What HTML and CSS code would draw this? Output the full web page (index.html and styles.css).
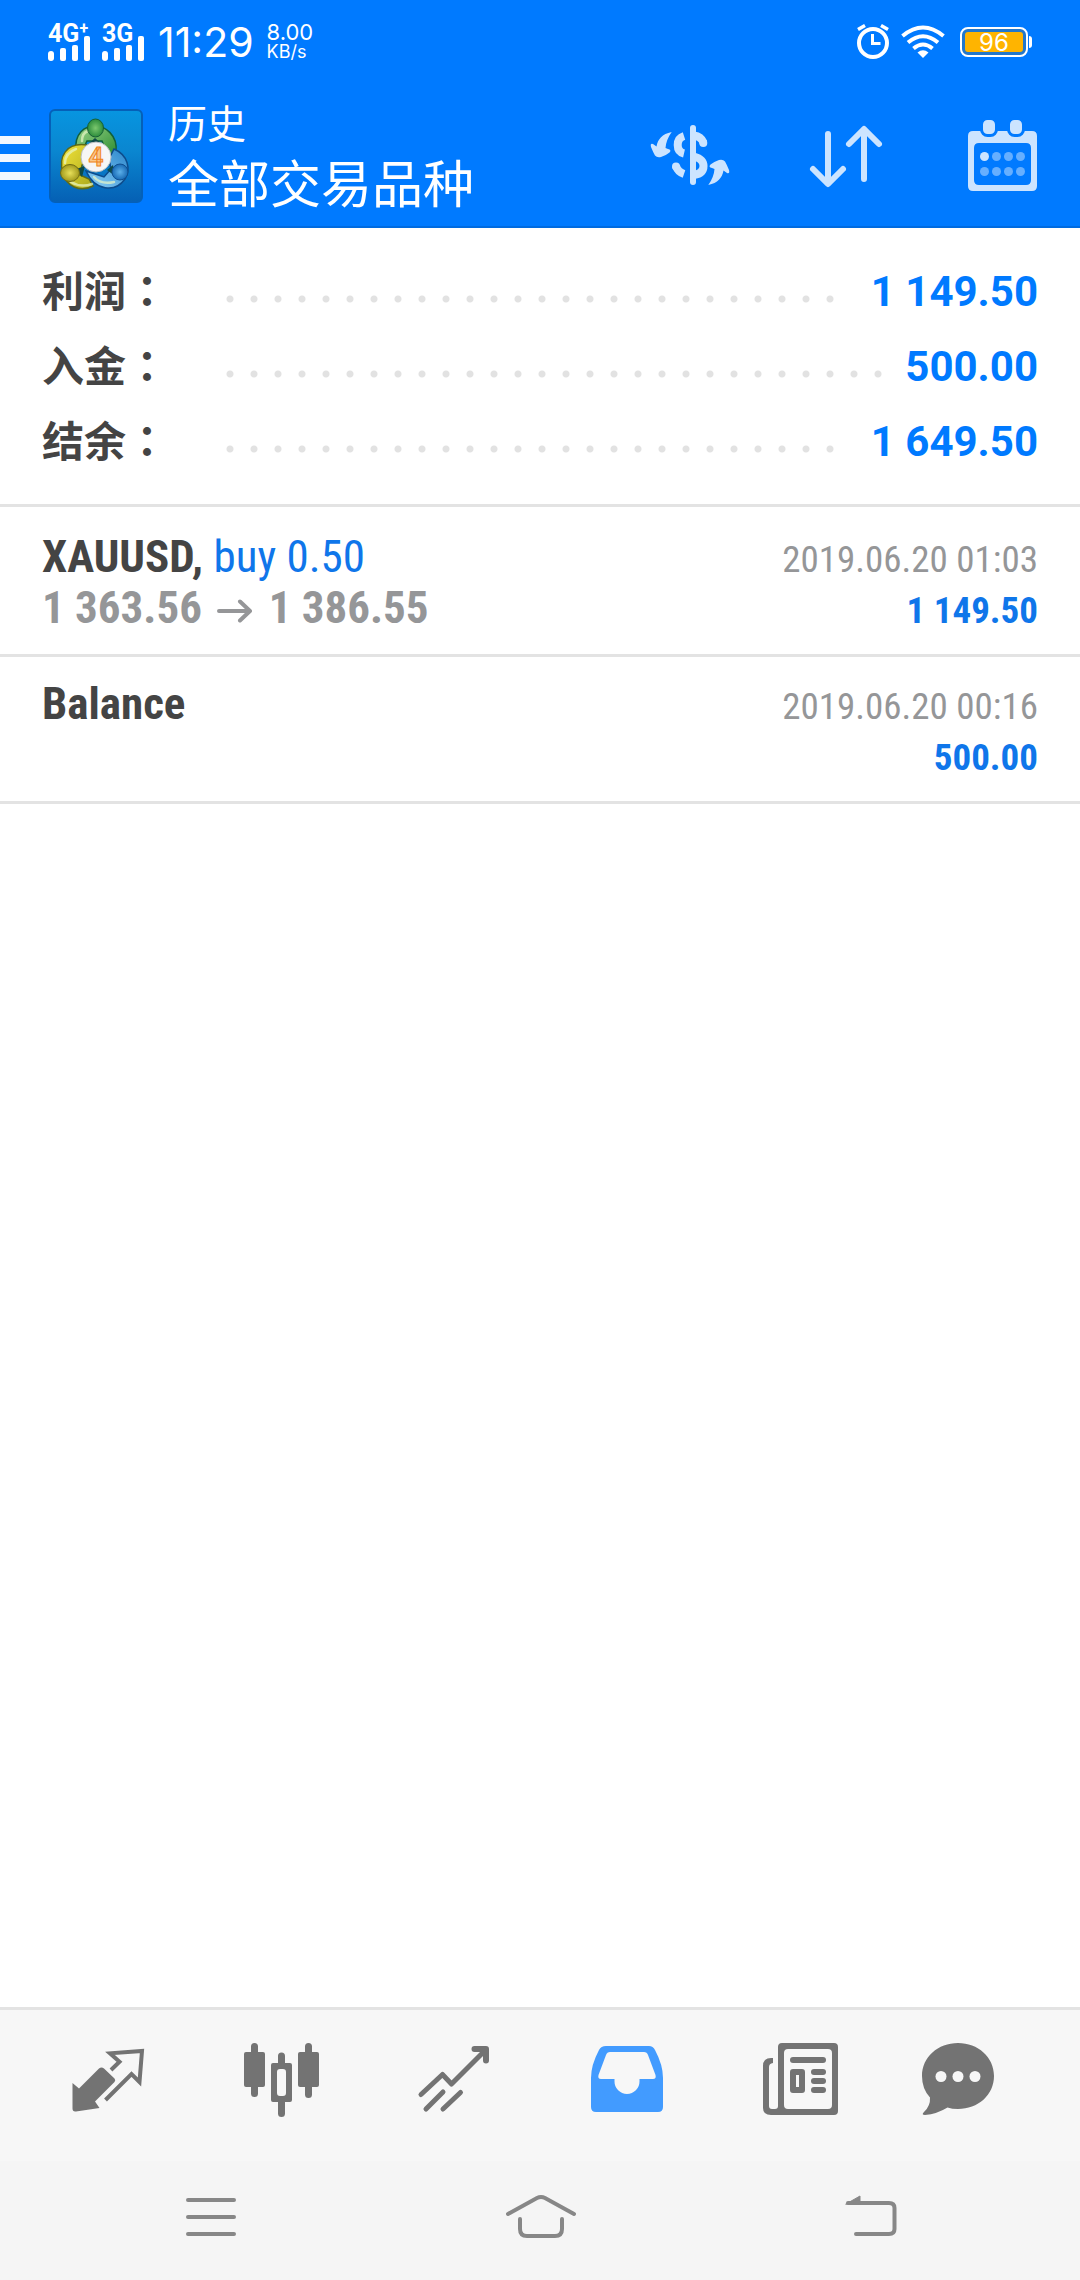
FILE: index.html
```html
<!DOCTYPE html>
<html lang="zh-CN">
<head>
<meta charset="utf-8">
<meta name="viewport" content="width=device-width, initial-scale=1">
<title>历史</title>
<link rel="stylesheet" href="styles.css">
</head>
<body>
<div class="app">
  <div class="status">
    <div class="sim">
      <span class="sim-label">4G<sup class="plus">+</sup></span>
      <svg class="bars" viewBox="0 0 42 25" aria-hidden="true"><rect y="15" width="6" height="10" rx="3"/><rect x="12" y="12" width="6" height="13" rx="2"/><rect x="24" y="9" width="6" height="16" rx="2"/><rect x="36" width="6" height="25" rx="2"/></svg>
    </div>
    <div class="sim">
      <span class="sim-label">3G</span>
      <svg class="bars" viewBox="0 0 42 25" aria-hidden="true"><rect y="15" width="6" height="10" rx="3"/><rect x="12" y="12" width="6" height="13" rx="2"/><rect x="24" y="9" width="6" height="16" rx="2"/><rect x="36" width="6" height="25" rx="2"/></svg>
    </div>
    <time class="clock">11:29</time>
    <div class="speed"><span class="rate">8.00</span><span class="unit">KB/s</span></div>
    <div class="status-right">
      <svg class="alarm" viewBox="0 0 32 36" fill="none" stroke="#fff" stroke-width="4" aria-hidden="true"><circle cx="16" cy="19" r="14"/><path d="M15.500 10V19.500H23.500" stroke-width="3"/><path d="M1 5.500L8 1.500M24 1.500L31 5.500" stroke-width="3.500"/></svg>
      <svg class="wifi" viewBox="0 0 44 34" fill="none" stroke="#fff" stroke-width="4" aria-hidden="true"><path d="M1.500 11Q22 -6 42.500 11"/><path d="M7 17.500Q22 5 37 17.500"/><path d="M12.500 23.500Q22 15.500 31.500 23.500"/><path d="M16.500 27.500Q22 23 27.500 27.500L22 33Z" fill="#fff" stroke="none"/></svg>
      <div class="battery"><span class="level">96</span></div>
    </div>
  </div>

  <header class="header">
    <button class="menu" aria-label="菜单"><span></span><span></span><span></span></button>
    <svg class="logo" viewBox="0 0 94 94" aria-hidden="true">
      <defs>
        <linearGradient id="bg" x1="0" y1="0" x2="0" y2="1"><stop offset="0" stop-color="#0795e0"/><stop offset=".45" stop-color="#0a86d0"/><stop offset="1" stop-color="#0560b4"/></linearGradient>
        <linearGradient id="gr" x1="0" y1="0" x2="1" y2="1"><stop offset="0" stop-color="#9ad58a"/><stop offset="1" stop-color="#23862a"/></linearGradient>
        <linearGradient id="ye" x1="0" y1="0" x2="1" y2="1"><stop offset="0" stop-color="#f3e43a"/><stop offset="1" stop-color="#a9a81c"/></linearGradient>
        <linearGradient id="bl" x1="0" y1="1" x2="1" y2="0"><stop offset="0" stop-color="#8cd0f6"/><stop offset="1" stop-color="#2b86cc"/></linearGradient>
        <radialGradient id="gh"><stop offset="0" stop-color="#7cc86e"/><stop offset="1" stop-color="#2c8c3c"/></radialGradient>
        <radialGradient id="yh"><stop offset="0" stop-color="#e8e05a"/><stop offset="1" stop-color="#a29a1c"/></radialGradient>
        <radialGradient id="bh"><stop offset="0" stop-color="#5cb0ea"/><stop offset="1" stop-color="#1769b4"/></radialGradient>
      </defs>
      <rect x="1" y="1" width="92" height="92" rx="5" fill="url(#bg)" stroke="#0560b8" stroke-width="2"/>
      <path d="M27 42C25 24 36 17 46 17S69 26 67 43L61 52L53 32L38 32L32 44Z" fill="url(#gr)" stroke="#12603a" stroke-width="1.500"/>
      <path d="M38 36C17 33 9 48 14 64C17 77 31 84 44 77L40 70L31 66L33 56L38 50Z" fill="url(#ye)" stroke="#5e6a18" stroke-width="1.500"/>
      <path d="M65 40C79 46 82 60 76 70C66 84 46 82 37 62L55 68L62 60L60 50Z" fill="url(#bl)" stroke="#0d4c8c" stroke-width="1.500"/>
      <path d="M16 54Q16 44 27 40M43 75Q32 79 22 73M33 32Q33 24 39 22M45 68Q52 76 65 73" fill="none" stroke="#e8f6c8" stroke-width="2.500" stroke-linecap="round" opacity=".7"/>
      <path d="M36 38L46 29L56 38ZM27 60L36 57L33 68ZM58 61L64 56L66 67Z" fill="#0e4a48"/>
      <ellipse cx="46.500" cy="19" rx="8" ry="9" fill="url(#gh)" stroke="#165e34"/>
      <ellipse cx="21" cy="64" rx="9.500" ry="8.500" fill="url(#yh)" stroke="#716c14"/>
      <ellipse cx="71" cy="63" rx="8" ry="8" fill="url(#bh)" stroke="#0f4e90"/>
      <circle cx="47" cy="48" r="15" fill="#f6f6f6" stroke="#b9bfc2"/>
      <text x="47" y="57" text-anchor="middle" class="logo-four">4</text>
    </svg>
    <div class="titles">
      <span class="crumb">历史</span>
      <h1 class="title">全部交易品种</h1>
    </div>
    <div class="actions">
      <button class="action" aria-label="入金与出金">
        <svg viewBox="0 0 80 80" fill="none" stroke="#cce4ff" stroke-width="8">
          <path id="curl" d="M21.700 17C12 19 8 24 6.500 31.500L3 29Q0 28 1 32Q3 37 5 40.500Q7 43 11 42Q16 40.500 19.500 37.500Q22 35 18 34L15.500 33Q16 25 21.700 17Z" fill="#cce4ff" stroke="none"/>
          <use href="#curl" transform="rotate(180 40 43.500)"/>
          <path d="M34 21Q27.700 23 27.700 30Q27.700 37 34 38.500M44 20.500Q51 21.500 53.500 27.500" /><circle cx="53.300" cy="28" r="4" fill="#cce4ff" stroke="none"/>
          <path d="M34 59Q28 57 26 51"/><circle cx="26" cy="51.500" r="4" fill="#cce4ff" stroke="none"/>
          <path d="M44 41.500Q53.500 44 53.500 51Q53.500 58.500 44 60"/>
          <path d="M43 13V67" stroke-width="6" stroke-linecap="round"/>
        </svg>
      </button>
      <button class="action" aria-label="排序">
        <svg viewBox="0 0 80 80" fill="none" stroke="#cce4ff" stroke-width="6" stroke-linecap="round" stroke-linejoin="round"><path d="M22 19V67M58 15V64"/><path d="M7 54L22 69L37 54M43 29L58 14L73 29"/></svg>
      </button>
      <button class="action" aria-label="日期">
        <svg viewBox="0 0 80 80" fill="#cce4ff"><path fill-rule="evenodd" d="M11 16H70Q75 16 75 21V71Q75 76 70 76H11Q6 76 6 71V21Q6 16 11 16ZM17 28Q12 28 12 33V65Q12 70 17 70H64Q69 70 69 65V33Q69 28 64 28Z"/><g stroke="#007aff" stroke-width="3"><rect x="19.500" y="3.500" width="15" height="17" rx="6"/><rect x="46.500" y="3.500" width="15" height="17" rx="6"/></g><circle cx="22.500" cy="41.500" r="4.500"/><g fill="#66afff"><circle cx="34.500" cy="41.500" r="4.500"/><circle cx="46.500" cy="41.500" r="4.500"/><circle cx="58.500" cy="41.500" r="4.500"/><circle cx="22.500" cy="56.500" r="4.500"/><circle cx="34.500" cy="56.500" r="4.500"/><circle cx="46.500" cy="56.500" r="4.500"/><circle cx="58.500" cy="56.500" r="4.500"/></g></svg>
      </button>
    </div>
  </header>

  <main class="content">
    <dl class="summary">
      <div class="sum-row"><dt>利润<span class="colon" lang="zh-TW">：</span></dt><dd class="leader" aria-hidden="true"></dd><dd>1 149.50</dd></div>
      <div class="sum-row"><dt>入金<span class="colon" lang="zh-TW">：</span></dt><dd class="leader" aria-hidden="true"></dd><dd>500.00</dd></div>
      <div class="sum-row"><dt>结余<span class="colon" lang="zh-TW">：</span></dt><dd class="leader" aria-hidden="true"></dd><dd>1 649.50</dd></div>
    </dl>
    <ul class="deals">
      <li class="deal">
        <div class="line"><span class="symbol">XAUUSD, <span class="side">buy 0.50</span></span><time class="date">2019.06.20 01:03</time></div>
        <div class="line"><span class="prices">1 363.56 <svg class="arrow" viewBox="0 0 36 24" fill="none" stroke="#959698" stroke-width="4" stroke-linecap="round" stroke-linejoin="round" role="img" aria-label="至"><path d="M2 12H32M23 2.500L33 12L23 21.500"/></svg> 1 386.55</span><span class="profit">1 149.50</span></div>
      </li>
      <li class="deal">
        <div class="line"><span class="symbol">Balance</span><time class="date">2019.06.20 00:16</time></div>
        <div class="line"><span class="profit">500.00</span></div>
      </li>
    </ul>
  </main>

  <nav class="tabs">
    <button class="tab" aria-label="行情">
      <svg viewBox="0 0 76 76" fill="none" stroke="#737373" stroke-width="4" stroke-linejoin="miter"><path d="M2.500 41L9 46.500L29 26.500Q31.500 24.500 34 26.500L44.500 36.500Q46 38 44.500 40L25 59.500L29.500 66L6 69.500Q2.500 70 2.500 66.500Z" fill="#737373" stroke="none"/><path d="M41 28L49.500 19.700L40 11.300L72 9L69.500 40L61.500 32L35.500 58"/></svg>
    </button>
    <button class="tab" aria-label="图表">
      <svg viewBox="0 0 76 76" fill="#737373" stroke="#737373" stroke-linecap="round"><g stroke="none"><rect x="1" y="10" width="21" height="35" rx="2"/><rect x="55" y="10" width="21" height="35" rx="2"/><path fill-rule="evenodd" d="M30 21H47Q49 21 49 23V58Q49 60 47 60H30Q28 60 28 58V23Q28 21 30 21ZM37 27Q34 27 34 30V51Q34 54 37 54H40Q43 54 43 51V30Q43 27 40 27Z"/></g><path d="M11.500 4.500V51.500M65.500 4.500V52.500M38.500 14V23M38.500 59V71.500" stroke-width="7"/></svg>
    </button>
    <button class="tab" aria-label="交易">
      <svg viewBox="0 0 76 76" fill="none" stroke="#737373" stroke-width="5" stroke-linecap="round" stroke-linejoin="round"><path d="M5 52.500L26.500 32.500L35.500 42L69 8.500M10 67L27 50M27 67L44.500 50.500"/><path d="M58.500 7H70V18.500" stroke-width="6"/></svg>
    </button>
    <button class="tab" aria-label="历史" aria-current="page">
      <svg viewBox="0 0 76 76" fill="#429bff"><path fill-rule="evenodd" d="M17 4H60Q64 4 66 8Q74 23 74 36V65Q74 70 69 70H7Q2 70 2 65V36Q2 23 10 8Q12 4 17 4ZM21 10Q18 10 17 13L9.500 33Q8.500 37 12 37H25.500V39.500A12.500 12.500 0 0 0 50.500 39.500V37H64Q67.500 37 66.500 33L59 13Q58 10 55 10Z"/></svg>
    </button>
    <button class="tab" aria-label="新闻">
      <svg viewBox="0 0 76 76" fill="#737373"><path fill-rule="evenodd" d="M20 1H72Q76 1 76 5V69Q76 73 72 73H9Q1 73 1 66V24Q1 16 9 16H11V21Q7 21.500 7 25V64Q7 67 10 67H13Q16 67 16 64V5Q16 1 20 1ZM26 7Q22 7 22 11V63Q22 67 26 67H66Q70 67 70 63V11Q70 7 66 7Z"/><rect x="28" y="15" width="36" height="6" rx="3"/><path fill-rule="evenodd" d="M31 27H40Q43 27 43 30V48Q43 51 40 51H31Q28 51 28 48V30Q28 27 31 27ZM34 33V45H37V33Z"/><rect x="49" y="27" width="15" height="6" rx="3"/><rect x="49" y="36" width="15" height="6" rx="3"/><rect x="49" y="45" width="15" height="6" rx="3"/></svg>
    </button>
    <button class="tab tab-last" aria-label="消息">
      <svg viewBox="0 0 76 76" fill="#737373"><path d="M38 1C58 1 74 15 74 34S58 67 38 67Q32 67 27.500 65.500Q17 72 5 73Q1 73 4 70Q10.500 64 10 55.500Q2 47 2 34C2 15 18 1 38 1Z"/><g fill="#f7f7f7"><circle cx="21" cy="34.500" r="5.500"/><circle cx="38" cy="34.500" r="5.500"/><circle cx="55" cy="34.500" r="5.500"/></g></svg>
    </button>
  </nav>

  <nav class="sysnav">
    <button class="sys" aria-label="最近任务"><svg viewBox="0 0 80 60" fill="none" stroke="#878787" stroke-width="4" stroke-linecap="round"><path d="M17 13H63M17 30H63M17 47H63"/></svg></button>
    <button class="sys" aria-label="主屏幕"><svg viewBox="0 0 80 60" fill="none" stroke="#878787" stroke-width="4" stroke-linecap="round"><path d="M7 27L36 11Q40 9 44 11L73 27M19 32V42Q19 49 26 49H54Q61 49 61 42V32"/></svg></button>
    <button class="sys" aria-label="返回"><svg viewBox="0 0 80 60" fill="none" stroke="#878787" stroke-width="4" stroke-linecap="round"><path d="M17 16H58Q63.500 16 63.500 21V42Q63.500 47 58 47H25"/><path d="M15 17L29 9V16Z" fill="#878787" stroke-width="1"/></svg></button>
  </nav>
</div>
</body>
</html>
```
FILE: styles.css
```css
* { box-sizing: border-box; }

body {
  margin: 0;
  background: #fff;
  font-family: Roboto, "Noto Sans CJK SC", sans-serif;
}

button {
  margin: 0;
  padding: 0;
  border: 0;
  background: none;
  cursor: pointer;
}

svg { display: block; }

.app {
  display: flex;
  flex-direction: column;
  min-height: 100vh;
}

/* status bar */
.status {
  display: flex;
  align-items: center;
  height: 86px;
  padding: 0 48px 2px;
  background: #007aff;
  color: #fff;
}

.sim {
  display: flex;
  flex-direction: column;
  width: 42px;
  margin-right: 12px;
}

.sim-label {
  height: 12px;
  font-size: 25px;
  font-weight: 700;
  line-height: 20px;
  white-space: nowrap;
}

.plus {
  font-size: 16px;
  line-height: 8px;
  vertical-align: 8px;
}

.bars {
  width: 42px;
  height: 25px;
  fill: #fff;
}

.clock {
  margin-left: 2px;
  font: 41px/48px Inter, sans-serif;
}

.speed {
  display: flex;
  flex-direction: column;
  margin-left: 13px;
  font-family: Inter, sans-serif;
}

.rate { font-size: 22px; line-height: 20px; }
.unit { font-size: 18px; line-height: 20px; }

.status-right {
  display: flex;
  align-items: center;
  gap: 12px;
  margin-left: auto;
}

.alarm { width: 32px; height: 36px; }
.wifi { width: 44px; height: 34px; }

.battery {
  position: relative;
  width: 68px;
  height: 30px;
  margin: 0 4px 0 3px;
  padding: 3px;
  border: 2px solid #fff;
  border-radius: 8px;
  background: #2277cc;
}

.battery::after {
  content: "";
  position: absolute;
  top: 7px;
  right: -6px;
  width: 3px;
  height: 12px;
  border-radius: 0 3px 3px 0;
  background: #fff;
}

.level {
  display: block;
  height: 20px;
  border-radius: 3px;
  background: #ffb400;
  font: 24px/21px Inter, sans-serif;
  text-align: center;
}

/* title bar */
.header {
  display: flex;
  align-items: center;
  height: 142px;
  padding-right: 38px;
  border-bottom: 2px solid #006be0;
  background: #007aff;
  color: #fff;
}

.menu {
  display: grid;
  gap: 10px;
  width: 30px;
  margin-top: 4px;
}

.menu span {
  height: 8px;
  background: #f2f8ff;
}

.logo {
  width: 94px;
  height: 94px;
  margin-left: 19px;
}

.logo-four {
  font: 700 26px Roboto, sans-serif;
  fill: #f9c98a;
  stroke: #f08422;
  stroke-width: 1px;
}

.titles {
  display: flex;
  flex-direction: column;
  margin-left: 25px;
  padding-bottom: 10px;
  font-family: "Noto Sans CJK SC", sans-serif;
}

.crumb { font-size: 39px; line-height: 60px; }

.title {
  margin: 0;
  font-size: 51px;
  font-weight: 400;
  line-height: 60px;
}

.actions {
  display: flex;
  gap: 76px;
  margin-left: auto;
  padding-bottom: 3px;
}

.action svg { width: 80px; height: 80px; }

/* totals */
.content { flex: 1; }

.summary {
  margin: 0;
  padding: 26px 42px 25px;
  border-bottom: 3px solid #e3e3e3;
  font-size: 42px;
  font-weight: 700;
  line-height: 75px;
}

.sum-row {
  display: flex;
  height: 75px;
}

.sum-row dt {
  width: 176px;
  color: #444;
  font-family: "Noto Sans CJK SC", sans-serif;
  line-height: 69px;
}

.sum-row dd {
  margin: 0;
  color: #007aff;
}

.colon { font-family: "Noto Sans CJK TC", sans-serif; }

.sum-row .leader {
  flex: 1;
  margin-right: 22px;
  background: radial-gradient(circle at 12px 45px, #e2e2e2 3px, transparent 4px) 0 0 / 24px 75px repeat-x;
}

/* deals */
.deals {
  margin: 0;
  padding: 3px 0 0;
  list-style: none;
  font-family: "Roboto Condensed", "Liberation Sans Narrow", Roboto, sans-serif;
}

.deal {
  height: 147px;
  padding: 19px 42px 0;
  border-bottom: 3px solid #e3e3e3;
}

.line {
  display: flex;
  align-items: baseline;
  justify-content: space-between;
  height: 51px;
  font-size: 45px;
  line-height: 56px;
  white-space: nowrap;
}

/* keeps one baseline in rows without a left-hand text */
.line::before { content: "\200b"; width: 0; }

.symbol {
  margin-right: auto;
  color: #444;
  font-weight: 700;
}

.side {
  color: #0f76ea;
  font-weight: 400;
}

.prices {
  color: #959698;
  font-weight: 700;
}

.arrow {
  display: inline-block;
  width: 36px;
  height: 24px;
  margin: 0 5px;
}

.date {
  color: #959698;
  font-size: 37px;
}

.profit {
  margin-left: auto;
  color: #0f76ea;
  font-size: 37px;
  font-weight: 700;
}

/* app tabs */
.tabs {
  display: flex;
  align-items: center;
  height: 154px;
  padding: 0 51px 11px 21px;
  border-top: 3px solid #e3e3e3;
  background: #f7f7f7;
}

.tab {
  display: flex;
  flex: 173 1 0;
  justify-content: center;
}

.tab-last { flex-grow: 143; }

.tab svg { width: 76px; height: 76px; }

/* system navigation */
.sysnav {
  display: flex;
  align-items: center;
  height: 119px;
  padding: 0 44px 7px 46px;
  background: #f5f5f5;
}

.sys {
  display: flex;
  flex: 1;
  justify-content: center;
}

.sys svg { width: 80px; height: 60px; }
```
